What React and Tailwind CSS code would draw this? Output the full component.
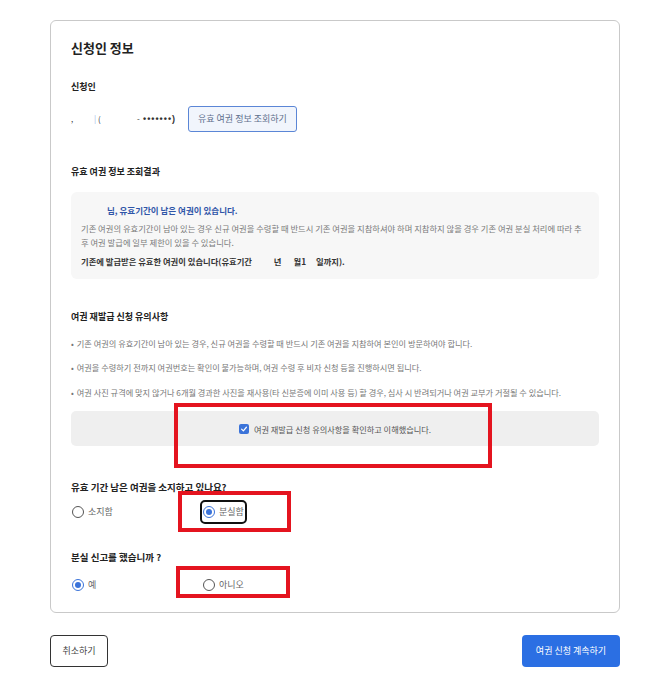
import React from "react";

const F = "font-['Noto_Sans_CJK_KR','Noto_Sans',sans-serif]";

function Radio({ checked, label, focus }) {
  return (
    <div
      className={
        "flex items-center gap-[4px] h-[20px] " +
        (focus ? "outline-2 outline-[#111] rounded-[3px] pr-[1px] -ml-[1px] pl-[1px]" : "")
      }
    >
      <span
        className={
          "w-[12px] h-[12px] rounded-full border flex items-center justify-center bg-white " +
          (checked ? "border-[#3b73d9]" : "border-[#555]")
        }
      >
        {checked && <span className="w-[6px] h-[6px] rounded-full bg-[#3b73d9]" />}
      </span>
      <span className="text-[9px] leading-[14px] text-[#666]">{label}</span>
    </div>
  );
}

export default function App() {
  return (
    <div className={"relative w-[650px] h-[692px] bg-white " + F}>
      <div className="pt-[20px] pl-[50px]">
        <div className="w-[570px] border border-[#c9c9c9] rounded-[6px] px-[20px] pt-[17px] pb-[17px] flex flex-col">
          <div className="text-[13px] leading-[20px] font-bold text-[#222]">신청인 정보</div>

          <div className="mt-[22px] text-[9px] leading-[14px] font-bold text-[#222]">신청인</div>

          <div className="mt-[12px] flex items-center h-[26px]">
            <div className="flex items-center text-[8px] leading-[14px] text-[#333] w-[117px]">
              <span className="w-[23px]">,</span>
              <span className="w-[4px] text-[#9bb6e6]">|</span>
              <span className="w-[39px]">(</span>
              <span className="w-[6px]">-</span>
              <span className="font-['Liberation_Sans',sans-serif] text-[9px] tracking-[1px] font-bold">•••••••)</span>
            </div>
            <button className="h-[26px] px-[9px] border border-[#5b86d6] bg-[#f1f5fc] rounded-[3px] text-[9px] leading-[14px] text-[#5e6f8c]">
              유효 여권 정보 조회하기
            </button>
          </div>

          <div className="mt-[33px] text-[9px] leading-[14px] font-bold text-[#222]">유효 여권 정보 조회결과</div>

          <div className="mt-[13px] bg-[#f7f7f7] rounded-[6px] pl-[10px] pr-[10px] pt-[11px] pb-[11px]">
            <div className="text-[8.5px] leading-[14px] font-bold text-[#2f55a8]">
              <span className="inline-block w-[26px]" />님, 유효기간이 남은 여권이 있습니다.
            </div>
            <div className="mt-[4px] text-[8.3px] leading-[14px] text-[#7a7a7a]">
              기존 여권의 유효기간이 남아 있는 경우 신규 여권을 수령할 때 반드시 기존 여권을 지참하셔야 하며 지참하지 않을 경우 기존 여권 분실 처리에 따라 추후 여권 발급에 일부 제한이 있을 수 있습니다.
            </div>
            <div className="mt-[5px] text-[8.3px] leading-[14px] font-bold text-[#333]">
              기존에 발급받은 유효한 여권이 있습니다(유효기간 <span className="inline-block w-[20px]" />년<span className="inline-block w-[12px]" />월1<span className="inline-block w-[10px]" />일까지).
            </div>
          </div>

          <div className="mt-[31px] text-[9px] leading-[14px] font-bold text-[#222]">여권 재발급 신청 유의사항</div>

          <div className="flex flex-col text-[8.2px] leading-[14px] text-[#777]">
            <div className="mt-[12px] flex gap-[3px]"><span>•</span><span>기존 여권의 유효기간이 남아 있는 경우, 신규 여권을 수령할 때 반드시 기존 여권을 지참하여 본인이 방문하여야 합니다.</span></div>
            <div className="mt-[10px] flex gap-[3px]"><span>•</span><span>여권을 수령하기 전까지 여권번호는 확인이 불가능하며, 여권 수령 후 비자 신청 등을 진행하시면 됩니다.</span></div>
            <div className="mt-[11px] flex gap-[3px]"><span>•</span><span>여권 사진 규격에 맞지 않거나 6개월 경과한 사진을 재사용(타 신분증에 이미 사용 등) 할 경우, 심사 시 반려되거나 여권 교부가 거절될 수 있습니다.</span></div>
          </div>

          <div className="mt-[12px] h-[35px] bg-[#efefef] rounded-[5px] flex items-center justify-center gap-[5px]">
            <span className="w-[10px] h-[10px] rounded-[2px] bg-[#3b73d9] flex items-center justify-center">
              <svg width="8" height="8" viewBox="0 0 10 10">
                <path d="M2 5.2 L4.2 7.3 L8 2.8" fill="none" stroke="white" strokeWidth="1.5" strokeLinecap="round" strokeLinejoin="round" />
              </svg>
            </span>
            <span className="text-[8.2px] leading-[14px] text-[#555]">여권 재발급 신청 유의사항을 확인하고 이해했습니다.</span>
          </div>

          <div className="mt-[34px] text-[9.5px] leading-[14px] font-bold text-[#222]">유효 기간 남은 여권을 소지하고 있나요?</div>
          <div className="mt-[8px] grid grid-cols-[132px_1fr] items-center">
            <div className="pl-[1px]"><Radio label="소지함" /></div>
            <div className="flex"><Radio label="분실함" checked focus /></div>
          </div>

          <div className="mt-[28px] text-[9.5px] leading-[14px] font-bold text-[#222]">분실 신고를 했습니까 ?</div>
          <div className="mt-[11px] grid grid-cols-[132px_1fr] items-center">
            <div className="pl-[1px]"><Radio label="예" checked /></div>
            <div><Radio label="아니오" /></div>
          </div>
        </div>

        <div className="mt-[22px] w-[570px] flex justify-between">
          <button className="w-[58px] h-[32px] border border-[#333] rounded-[4px] bg-white text-[9px] text-[#444]">취소하기</button>
          <button className="w-[98px] h-[32px] rounded-[4px] bg-[#2b6fe3] text-[9px] text-white">여권 신청 계속하기</button>
        </div>
      </div>

      <div className="absolute left-[174px] top-[403px] w-[318px] h-[65px] border-4 border-[#e4141f]" />
      <div className="absolute left-[178px] top-[491px] w-[113px] h-[41px] border-4 border-[#e4141f]" />
      <div className="absolute left-[176px] top-[566px] w-[114px] h-[32px] border-4 border-[#e4141f]" />
    </div>
  );
}
